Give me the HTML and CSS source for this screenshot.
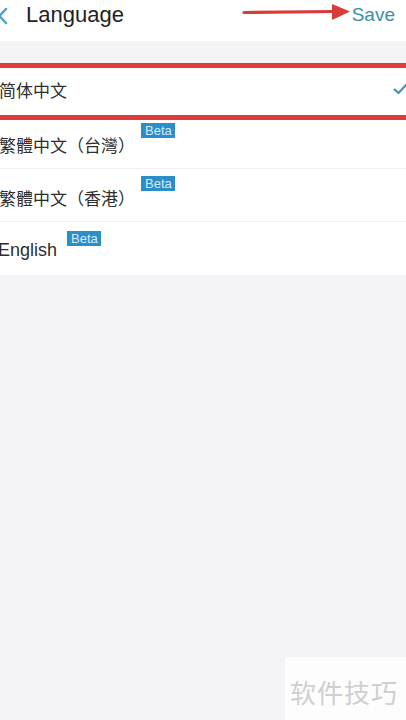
FILE: index.html
```html
<!DOCTYPE html>
<html lang="zh">
<head>
<meta charset="utf-8">
<title>Language</title>
<link rel="stylesheet" href="styles.css">
</head>
<body>
<div class="screen">
  <header class="navbar">
    <svg class="back" width="10" height="18" viewBox="0 0 10 18"><path d="M8 2 L1.5 9 L8 16" fill="none" stroke="#4a9fc3" stroke-width="2.4" stroke-linecap="round" stroke-linejoin="round"/></svg>
    <h1 class="title">Language</h1>
    <span class="save">Save</span>
    <svg class="arrow" width="110" height="20" viewBox="0 0 110 20"><path d="M2 9.5 L92 8.5" stroke="#d93b3b" stroke-width="3.2" stroke-linecap="round"/><path d="M90 1 L108 8.5 L90 17 Z" fill="#d93b3b"/></svg>
  </header>

  <div class="gap"></div>

  <ul class="lang-list">
    <li class="lang-row selected">
      <span class="lang-name">简体中文</span>
      <svg class="check" width="15" height="12" viewBox="0 0 15 12"><path d="M1.5 6.5 L5.5 10 L13.5 1.5" fill="none" stroke="#3e8db3" stroke-width="2" stroke-linecap="round" stroke-linejoin="round"/></svg>
    </li>
    <li class="lang-row">
      <span class="lang-name">繁體中文（台灣）</span><span class="beta">Beta</span>
    </li>
    <li class="lang-row">
      <span class="lang-name">繁體中文（香港）</span><span class="beta">Beta</span>
    </li>
    <li class="lang-row">
      <span class="lang-name latin">English</span><span class="beta">Beta</span>
    </li>
  </ul>

  <div class="highlight"></div>
  <div class="watermark">软件技巧</div>
</div>
</body>
</html>
```

FILE: styles.css
```css
* { box-sizing: border-box; }

html, body {
  margin: 0;
  padding: 0;
  background: #f4f3f6;
}

.screen {
  position: relative;
  width: 406px;
  height: 720px;
  overflow: hidden;
  font-family: "Liberation Sans", "Noto Sans CJK SC", sans-serif;
  color: #2b2b2b;
}

.navbar {
  position: relative;
  height: 41px;
  background: #fff;
  display: flex;
  align-items: center;
  padding: 0 11px 0 0;
}

.back {
  margin: -10px 0 0 -2px;
  flex: none;
}

.title {
  margin: -11px 0 0 18px;
  font-size: 22px;
  font-weight: normal;
  color: #1f1f1f;
  flex: 1;
}

.save {
  margin-top: -11px;
  font-size: 19px;
  color: #3c8fa8;
}

.arrow {
  position: absolute;
  left: 242px;
  top: 3px;
}

.gap { height: 22px; }

.lang-list {
  list-style: none;
  margin: 0;
  padding: 0;
  background: #fff;
}

.lang-row {
  height: 53px;
  display: flex;
  align-items: center;
  border-bottom: 1px solid #f2f1f4;
}

.lang-row:last-child { border-bottom: none; }

.lang-name {
  margin-left: -1px;
  font-size: 17px;
  color: #2e2e2e;
  margin-top: 4px;
}

.lang-name.latin {
  font-size: 18px;
  margin-left: -2px;
}

.selected .lang-name { margin-top: 0; }

.check {
  margin-left: auto;
  margin-right: -2px;
}

.beta {
  align-self: flex-start;
  margin: 7px 0 0 6px;
  background: #2c8ec8;
  color: #d4ebf8;
  font-size: 13px;
  line-height: 15px;
  padding: 0 3px 0 4px;
}

.lang-row:last-child .beta { margin-left: 10px; margin-top: 9px; }

.highlight {
  position: absolute;
  left: -6px;
  right: -6px;
  top: 63px;
  height: 57px;
  border: 5px solid #de3c3a;
}

.watermark {
  position: absolute;
  left: 285px;
  top: 657px;
  width: 130px;
  height: 70px;
  background: #fdfdfd;
  padding: 16px 0 0 5px;
  font-size: 26px;
  letter-spacing: 1px;
  color: #cfcfcf;
}
```
